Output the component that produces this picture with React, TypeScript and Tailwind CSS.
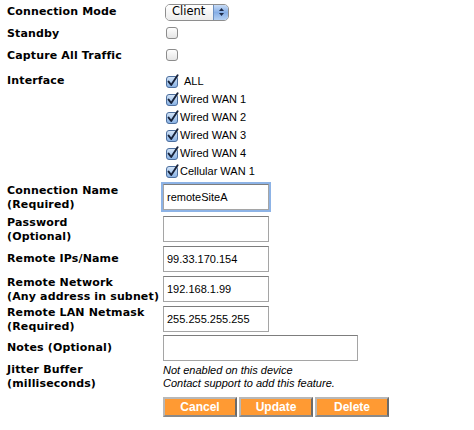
import React from "react";

const labelFont = { fontFamily: '"DejaVu Sans", Verdana, sans-serif' };
const arial = { fontFamily: '"Liberation Sans", Arial, sans-serif' };

function Box({ checked }: { checked: boolean }) {
  return (
    <svg width="14" height="15" viewBox="0 0 14 15" className="shrink-0">
      <defs>
        <linearGradient id={checked ? "cbOn" : "cbOff"} x1="0" y1="0" x2="0" y2="1">
          {checked ? (
            <>
              <stop offset="0" stopColor="#d6e6f8" />
              <stop offset="1" stopColor="#86b0e4" />
            </>
          ) : (
            <>
              <stop offset="0" stopColor="#ffffff" />
              <stop offset="1" stopColor="#e4e4e4" />
            </>
          )}
        </linearGradient>
      </defs>
      <rect
        x="0.5"
        y="2.5"
        width="11"
        height="11"
        rx="2.5"
        fill={checked ? "url(#cbOn)" : "url(#cbOff)"}
        stroke={checked ? "#4d6f9e" : "#8c8c8c"}
      />
      {checked && (
        <path
          d="M2.6 7.6 L5.2 11 L11.6 1.2"
          fill="none"
          stroke="#16223a"
          strokeWidth="1.9"
          strokeLinecap="round"
          strokeLinejoin="round"
        />
      )}
    </svg>
  );
}

function TextBox({ value, width = 106, focused = false }: { value?: string; width?: number; focused?: boolean }) {
  return (
    <div
      className={
        "h-[26px] flex items-center pl-[3px] text-[11px] text-black bg-white border border-[#a5a5a5] border-t-[#7d7d7d] " +
        (focused ? "shadow-[0_0_0_2px_#8db3e6]" : "")
      }
      style={{ ...arial, width }}
    >
      {value}
    </div>
  );
}

function Label({ lines, h = 26, center = false }: { lines: string[]; h?: number; center?: boolean }) {
  return (
    <div
      className={
        "w-[156px] shrink-0 text-[11px] font-bold leading-[14px] tracking-[0.15px] text-black flex flex-col " +
        (center ? "justify-center" : "")
      }
      style={{ ...labelFont, height: h }}
    >
      {lines.map((l) => (
        <span key={l} className="whitespace-nowrap">
          {l}
        </span>
      ))}
    </div>
  );
}

function Btn({ children }: { children: React.ReactNode }) {
  return (
    <div
      className="w-[74px] h-[20px] flex items-center justify-center bg-[#ff9a33] text-white text-[12px] font-bold border-2 border-t-[#b8b8b8] border-l-[#b8b8b8] border-r-[#6b6b6b] border-b-[#8a8a8a]"
      style={arial}
    >
      {children}
    </div>
  );
}

const ifaces = ["Wired WAN 1", "Wired WAN 2", "Wired WAN 3", "Wired WAN 4", "Cellular WAN 1"];

export default function App() {
  return (
    <div className="w-[474px] h-[430px] bg-white pl-[7px] pt-[1px] overflow-hidden">
      {/* connection mode */}
      <div className="flex items-center h-[22px]">
        <Label lines={["Connection Mode"]} h={22} center />
        <div className="ml-[2px] flex h-[17px] w-[64px] rounded-[5px] border border-[#8e8e8e] overflow-hidden">
          <div
            className="flex-1 flex items-center pl-[6px] text-[11.5px] text-black bg-gradient-to-b from-white to-[#ececec]"
            style={labelFont}
          >
            Client
          </div>
          <div className="w-[15px] flex flex-col items-center justify-center gap-[2px] bg-gradient-to-b from-[#c8dcf6] via-[#86aee6] to-[#b5d0f2] border-l border-[#6c8fc0]">
            <svg width="5" height="3" viewBox="0 0 5 3">
              <path d="M0 3 L2.5 0 L5 3Z" fill="#1c2a48" />
            </svg>
            <svg width="5" height="3" viewBox="0 0 5 3">
              <path d="M0 0 L2.5 3 L5 0Z" fill="#1c2a48" />
            </svg>
          </div>
        </div>
      </div>

      {/* standby */}
      <div className="flex items-center h-[22px]">
        <Label lines={["Standby"]} h={22} center />
        <div className="ml-[3px] mt-[-3px]">
          <Box checked={false} />
        </div>
      </div>

      {/* capture */}
      <div className="flex items-center h-[22px]">
        <Label lines={["Capture All Traffic"]} h={22} center />
        <div className="ml-[3px] mt-[-3px]">
          <Box checked={false} />
        </div>
      </div>

      {/* interfaces */}
      <div className="flex items-start mt-[6px] h-[111px]">
        <div className="pt-[1px]">
          <Label lines={["Interface"]} h={14} />
        </div>
        <div className="flex flex-col ml-[3px] mt-[-1px]">
          <div className="flex items-center h-[18px]">
            <Box checked />
            <span className="ml-[4px] text-[11px] text-black" style={arial}>
              ALL
            </span>
          </div>
          {ifaces.map((n) => (
            <div key={n} className="flex items-center h-[18px]">
              <Box checked />
              <span className="text-[11px] text-black" style={arial}>
                {n}
              </span>
            </div>
          ))}
        </div>
      </div>

      {/* connection name */}
      <div className="flex items-start h-[31px]">
        <Label lines={["Connection Name", "(Required)"]} />
        <TextBox value="remoteSiteA" focused />
      </div>

      <div className="flex items-start h-[31px] pt-[1px]">
        <Label lines={["Password", "(Optional)"]} />
        <TextBox />
      </div>

      <div className="flex items-start h-[30px]">
        <Label lines={["Remote IPs/Name"]} center />
        <TextBox value="99.33.170.154" />
      </div>

      <div className="flex items-start h-[30px]">
        <Label lines={["Remote Network", "(Any address in subnet)"]} />
        <TextBox value="192.168.1.99" />
      </div>

      <div className="flex items-start h-[29px]">
        <Label lines={["Remote LAN Netmask", "(Required)"]} />
        <TextBox value="255.255.255.255" />
      </div>

      <div className="flex items-start h-[28px]">
        <Label lines={["Notes (Optional)"]} center />
        <TextBox width={195} />
      </div>

      {/* jitter */}
      <div className="flex items-start h-[34px]">
        <Label lines={["Jitter Buffer", "(milliseconds)"]} h={28} />
        <div className="flex flex-col text-[11px] italic leading-[13px] text-black pt-[1px]" style={arial}>
          <span>Not enabled on this device</span>
          <span>Contact support to add this feature.</span>
        </div>
      </div>

      {/* actions */}
      <div className="flex items-start">
        <div className="w-[156px] shrink-0" />
        <div className="flex gap-[2px]">
          <Btn>Cancel</Btn>
          <Btn>Update</Btn>
          <Btn>Delete</Btn>
        </div>
      </div>
    </div>
  );
}
